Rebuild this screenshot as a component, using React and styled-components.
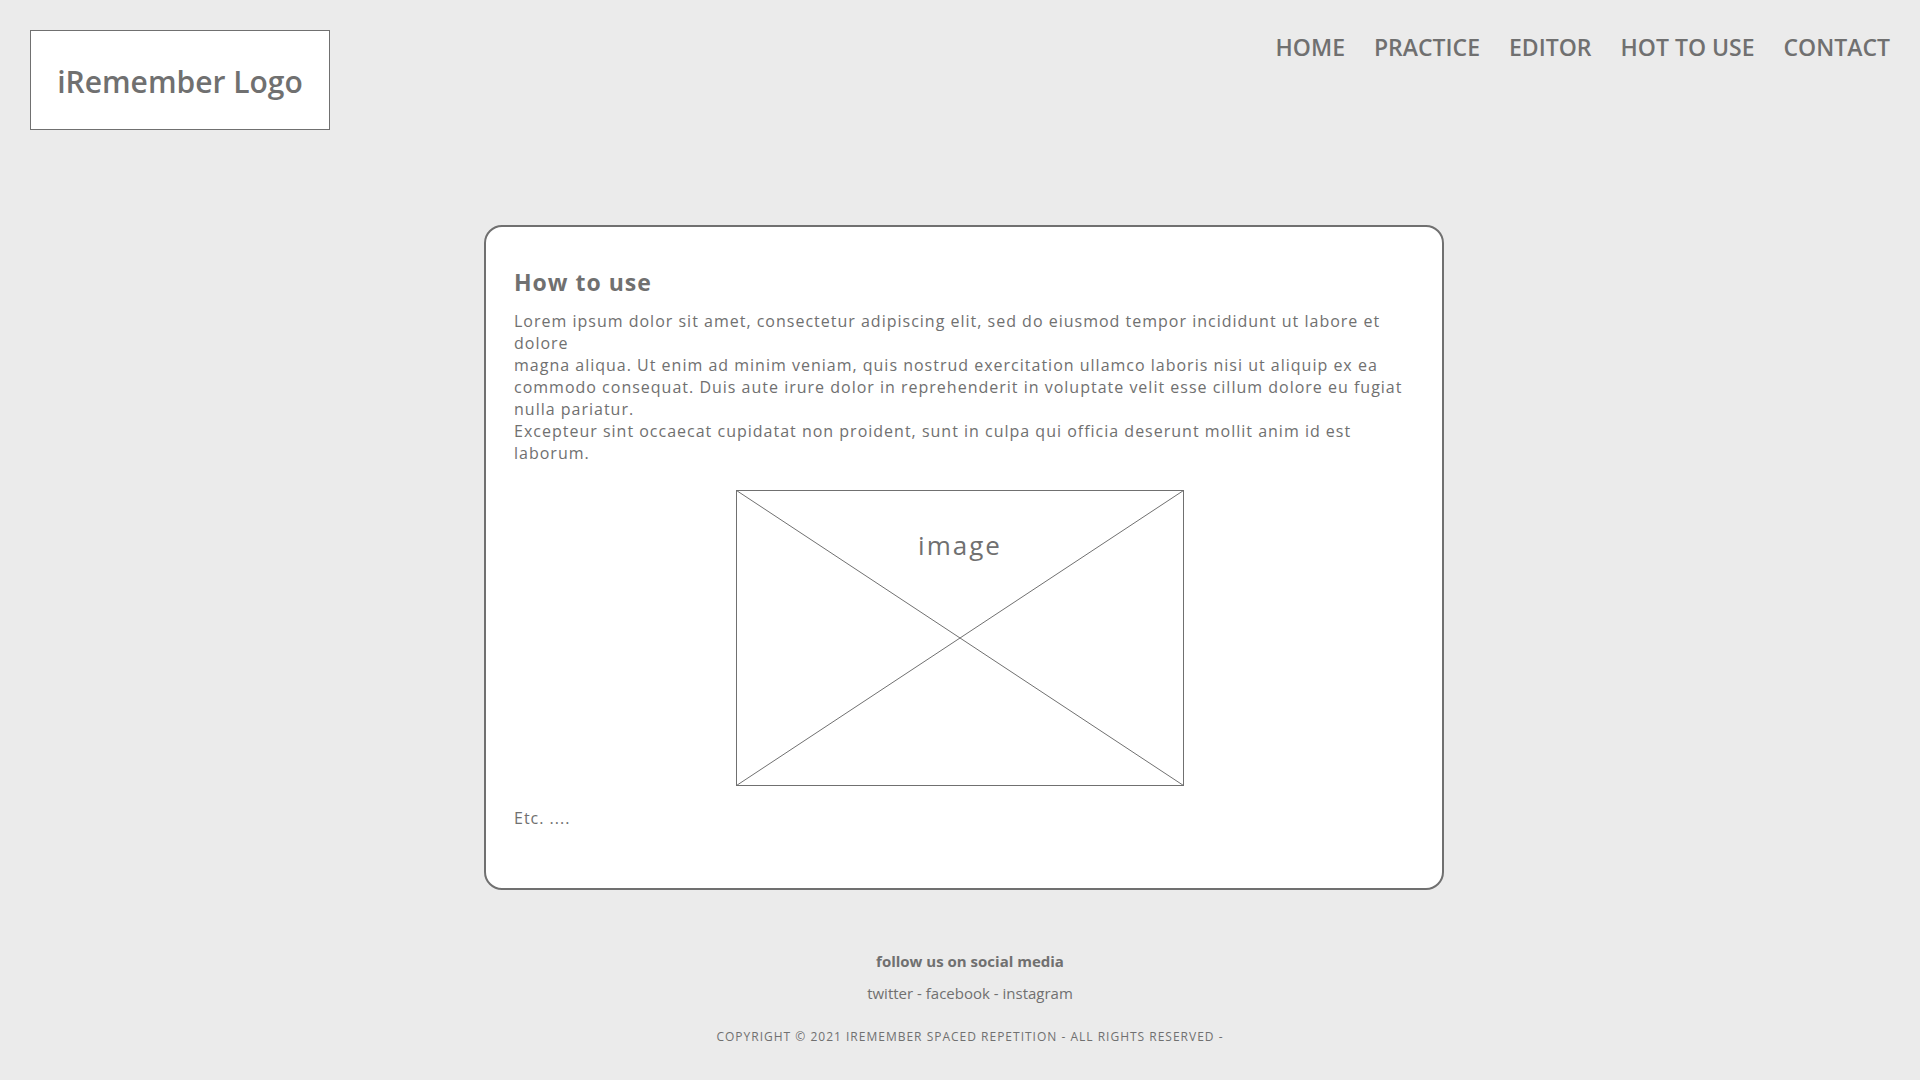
import React from 'react';
import styled, { createGlobalStyle } from 'styled-components';

const ink = '#707070';

const GlobalStyle = createGlobalStyle`
  *, *::before, *::after { box-sizing: border-box; }
  body {
    margin: 0;
    background: #ebebeb;
    color: ${ink};
    font-family: 'Segoe UI', 'Open Sans', 'Noto Sans', sans-serif;
  }
  h1, h2, p, ul { margin: 0; padding: 0; }
`;

const Page = styled.div`
  display: flex;
  flex-direction: column;
  min-height: 100vh;
`;

const Header = styled.header`
  display: flex;
  justify-content: space-between;
  align-items: flex-start;
  padding: 30px 30px 0;
`;

const Logo = styled.a`
  display: flex;
  align-items: center;
  justify-content: center;
  width: 300px;
  height: 100px;
  padding-top: 4px;
  border: 1px solid ${ink};
  background: #fff;
  color: inherit;
  font-size: 30px;
  font-weight: 600;
  line-height: 40px;
  text-decoration: none;
  white-space: nowrap;
`;

const NavList = styled.ul`
  display: flex;
  gap: 29px;
  list-style: none;
`;

const NavLink = styled.a`
  color: inherit;
  font-size: 23px;
  font-weight: 600;
  line-height: 34px;
  text-decoration: none;
  white-space: nowrap;
`;

const Main = styled.main`
  display: flex;
  justify-content: center;
  padding: 95px 0 0 8px;
`;

const Card = styled.article`
  width: 100%;
  max-width: 960px;
  padding: 38px 36px 59px 28px;
  border: 2px solid ${ink};
  border-radius: 18px;
  background: #fff;
`;

const Title = styled.h1`
  font-size: 23px;
  font-weight: 700;
  line-height: 34px;
  letter-spacing: 1px;
`;

const Copy = styled.p`
  padding-top: ${({ $gap }) => $gap}px;
  font-size: 16px;
  line-height: 22px;
  letter-spacing: 1px;
`;

const Figure = styled.figure`
  display: grid;
  justify-items: center;
  width: 448px;
  height: 296px;
  margin: 26px auto 0;
`;

const Cross = styled.svg`
  grid-area: 1 / 1;
  width: 100%;
  height: 100%;
  fill: none;
  stroke: ${ink};
`;

const Caption = styled.figcaption`
  grid-area: 1 / 1;
  padding-top: 37px;
  font-size: 26px;
  line-height: 36px;
  letter-spacing: 2px;
`;

const Footer = styled.footer`
  display: flex;
  flex-direction: column;
  align-items: center;
  padding: 60px 0 28px 20px;
  text-align: center;
`;

const FollowTitle = styled.h2`
  font-size: 15px;
  font-weight: 700;
  line-height: 22px;
`;

const Social = styled.p`
  padding-top: 10px;
  font-size: 15px;
  line-height: 22px;
`;

const SocialLink = styled.a`
  color: inherit;
  text-decoration: none;
`;

const Copyright = styled.p`
  padding-top: 22px;
  font-size: 12px;
  line-height: 22px;
  letter-spacing: 1px;
  text-transform: uppercase;
`;

const pages = ['HOME', 'PRACTICE', 'EDITOR', 'HOT TO USE', 'CONTACT'];

export default function App() {
  return (
    <Page>
      <GlobalStyle />
      <Header>
        <Logo href="#home">iRemember Logo</Logo>
        <nav>
          <NavList>
            {pages.map((page) => (
              <li key={page}>
                <NavLink href="#">{page}</NavLink>
              </li>
            ))}
          </NavList>
        </nav>
      </Header>
      <Main>
        <Card>
          <Title>How to use</Title>
          <Copy $gap={11}>
            Lorem ipsum dolor sit amet, consectetur adipiscing elit, sed do eiusmod tempor incididunt ut labore et
            <br />
            dolore
            <br />
            magna aliqua. Ut enim ad minim veniam, quis nostrud exercitation ullamco laboris nisi ut aliquip ex ea
            <br />
            commodo consequat. Duis aute irure dolor in reprehenderit in voluptate velit esse cillum dolore eu fugiat
            <br />
            nulla pariatur.
            <br />
            Excepteur sint occaecat cupidatat non proident, sunt in culpa qui officia deserunt mollit anim id est
            <br />
            laborum.
          </Copy>
          <Figure>
            <Cross viewBox="0 0 448 296" aria-hidden="true">
              <rect x="0.5" y="0.5" width="447" height="295" />
              <path d="M0.5 0.5 447.5 295.5M447.5 0.5 0.5 295.5" />
            </Cross>
            <Caption>image</Caption>
          </Figure>
          <Copy $gap={21}>Etc. ....</Copy>
        </Card>
      </Main>
      <Footer>
        <FollowTitle>follow us on social media</FollowTitle>
        <Social>
          <SocialLink href="#twitter">twitter</SocialLink> - <SocialLink href="#facebook">facebook</SocialLink> -{' '}
          <SocialLink href="#instagram">instagram</SocialLink>
        </Social>
        <Copyright>Copyright © 2021 iRemember Spaced Repetition - All Rights Reserved -</Copyright>
      </Footer>
    </Page>
  );
}
